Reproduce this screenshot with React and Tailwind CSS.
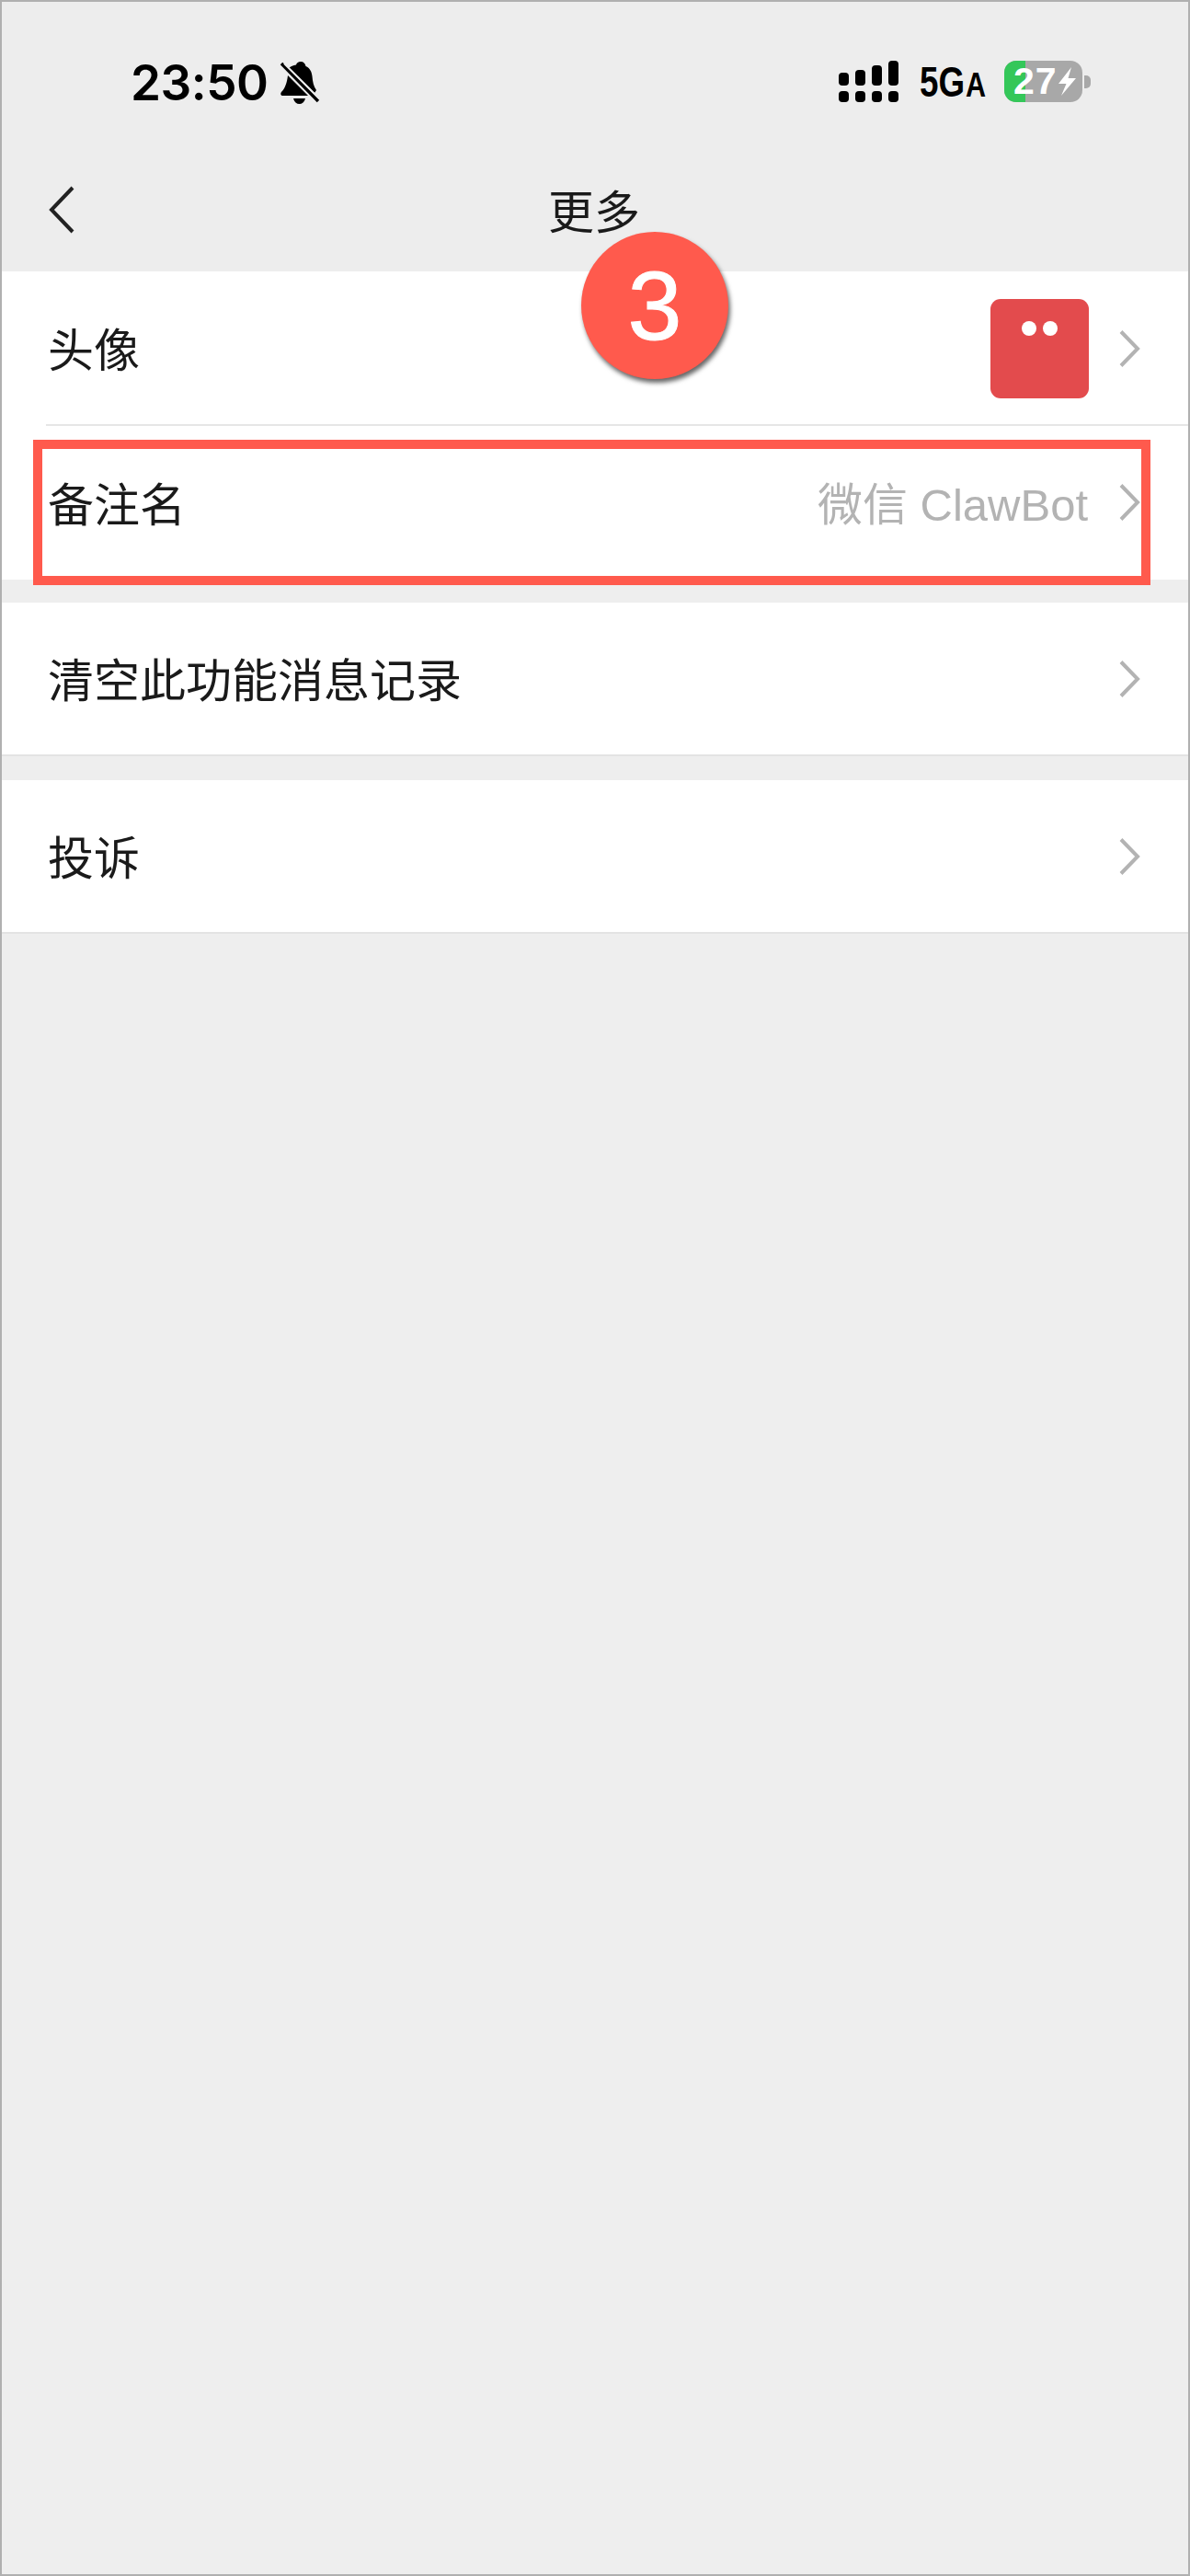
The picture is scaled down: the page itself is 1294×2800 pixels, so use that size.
import React from 'react'

const cjk = '"Liberation Sans", "Noto Sans CJK SC", sans-serif'

function Chevron() {
  return (
    <svg width="24" height="42" viewBox="0 0 24 42" fill="none" className="shrink-0">
      <path d="M3 2.5 L21 21 L3 39.5" stroke="#b3b3b3" strokeWidth="4" />
    </svg>
  )
}

function BellOff() {
  return (
    <svg width="44" height="48" viewBox="0 0 44 48" className="shrink-0">
      <path d="M23 1c3 0 5 2 5.500 5 4.500 2 6.500 6 7 11 .5 6 1.500 11 4.500 15l-2 3-28-27c2-2 5-3 8-3.500C18.500 2.500 20.500 1 23 1z" fill="#000" />
      <path d="M9 16 L31 38 H3.500C1.500 38 .5 36 2 34c4-4 6-10 7-18z" fill="#000" />
      <path d="M15 41 H28 C27 45 24.500 47 21.500 47 S16 45 15 41z" fill="#000" />
      <path d="M2 3 L42 44" stroke="#000" strokeWidth="3.500" />
      <path d="M5 3 L44 42" stroke="#ededed" strokeWidth="2" />
    </svg>
  )
}

function Signal() {
  const bars = ['h-[14px]', 'h-[17px]', 'h-[22px]', 'h-[27px]']
  return (
    <div className="flex gap-[7px] w-[65px] items-end">
      {bars.map((h, i) => (
        <div key={i} className="flex flex-col gap-[6px] w-[11px]">
          <div className={`${h} bg-black rounded-[4px]`}></div>
          <div className="h-[12px] bg-black rounded-[4px]"></div>
        </div>
      ))}
    </div>
  )
}

function Battery() {
  return (
    <div className="flex items-center gap-[2px]">
      <div className="relative w-[85px] h-[45px] rounded-[13px] overflow-hidden bg-[#a8a8a8]">
        <div className="w-[23px] h-full bg-[#34c759]"></div>
        <span className="absolute left-[10px] top-[2px] text-white font-bold text-[41px] leading-[41px] tracking-[1px]">27</span>
        <svg width="21" height="31" viewBox="0 0 21 31" className="absolute left-[58px] top-[7px]">
          <path d="M15 0 L1 18 H9.500 L4 31 L20 12 H11.500 Z" fill="#fff" />
        </svg>
      </div>
      <div className="w-[7px] h-[14px] bg-[#a8a8a8] rounded-r-[5px]"></div>
    </div>
  )
}

function Row({ label, value, children, divider, tall }) {
  return (
    <div className={`relative flex items-center ${tall ? 'h-[167.5px]' : 'h-[165px]'} pl-[50px] pr-[52px] text-[50px] text-[#1a1a1a]`}>
      <span className="flex-1 leading-none mt-[7px]">{label}</span>
      {value && <span className="text-[49px] text-[#b3b3b3] mr-[33px] leading-none mt-[7px]">{value}</span>}
      {children}
      <Chevron />
      {divider && <div className="absolute left-[48px] right-0 bottom-0 h-[2px] bg-[#e6e6e6]"></div>}
    </div>
  )
}

export default function App() {
  return (
    <div className="relative w-[1294px] h-[2800px] border-2 border-[#b0b0b0] bg-[#eeeeee] overflow-hidden" style={{ fontFamily: cjk }}>
      {/* status bar */}
      <div className="flex items-center justify-between h-[176px] bg-[#ededed] pl-[140px] pr-[106px]">
        <div className="flex items-center gap-[13px]">
          <span className="text-[53px] leading-none text-black tracking-[-0.5px]" style={{ fontFamily: 'Inter, sans-serif', fontWeight: 600 }}>23:50</span>
          <BellOff />
        </div>
        <div className="flex items-center mb-[3px]">
          <Signal />
          <div className="flex items-baseline w-[71px] ml-[23px] mr-[21px] font-bold text-black leading-none">
            <span className="text-[46px] origin-left scale-x-[0.8] w-[50px]">5G</span>
            <span className="text-[36px] origin-left scale-x-[0.85]">A</span>
          </div>
          <Battery />
        </div>
      </div>

      {/* nav */}
      <div className="relative flex items-center justify-center h-[117px] pb-[10px] bg-[#ededed]">
        <svg width="30" height="52" viewBox="0 0 30 52" fill="none" className="absolute left-[50px] top-[24px]">
          <path d="M27 2 L4 26 L27 50" stroke="#222" strokeWidth="4" />
        </svg>
        <span className="text-[50px] leading-none text-[#1a1a1a] ml-[-2px]">更多</span>
      </div>

      <div className="bg-white">
        <Row label="头像" divider tall>
          <div className="flex justify-center gap-[7px] w-[107px] h-[108px] pt-[24px] mr-[32px] rounded-[11px] bg-[#e34b4d]">
            <div className="w-[16px] h-[16px] rounded-full bg-white"></div>
            <div className="w-[16px] h-[16px] rounded-full bg-white"></div>
          </div>
        </Row>
        <Row label="备注名" value="微信 ClawBot" tall />
      </div>
      <div className="mt-[25px] bg-white border-b-2 border-[#e3e3e3]">
        <Row label="清空此功能消息记录" />
      </div>
      <div className="mt-[26px] bg-white border-b-2 border-[#e3e3e3]">
        <Row label="投诉" />
      </div>

      {/* annotation */}
      <div className="absolute left-[34px] top-[476px] w-[1215px] h-[158px] border-[10px] border-[#ff5a4d]"></div>
      <div className="absolute left-[630px] top-[250px] flex items-center justify-center w-[160px] h-[160px] rounded-full bg-[#ff5a4d] text-white text-[106px] leading-none [-webkit-text-stroke:1px_white] shadow-[2px_4px_5px_rgba(0,0,0,0.6)]">3</div>
    </div>
  )
}
